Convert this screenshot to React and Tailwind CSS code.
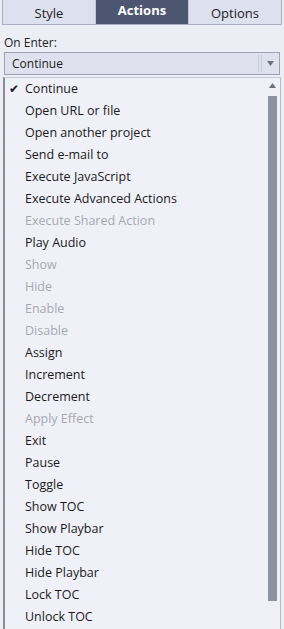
import { useState } from 'react';

const actions = [
    { label: 'Continue', checked: true },
    { label: 'Open URL or file' },
    { label: 'Open another project' },
    { label: 'Send e-mail to' },
    { label: 'Execute JavaScript' },
    { label: 'Execute Advanced Actions' },
    { label: 'Execute Shared Action', disabled: true },
    { label: 'Play Audio' },
    { label: 'Show', disabled: true },
    { label: 'Hide', disabled: true },
    { label: 'Enable', disabled: true },
    { label: 'Disable', disabled: true },
    { label: 'Assign' },
    { label: 'Increment' },
    { label: 'Decrement' },
    { label: 'Apply Effect', disabled: true },
    { label: 'Exit' },
    { label: 'Pause' },
    { label: 'Toggle' },
    { label: 'Show TOC' },
    { label: 'Show Playbar' },
    { label: 'Hide TOC' },
    { label: 'Hide Playbar' },
    { label: 'Lock TOC' },
    { label: 'Unlock TOC' },
];

const tabs = ['Style', 'Actions', 'Options'];

const App = () => {
    const [active, setActive] = useState('Actions');

    return (
        <div className="w-[284px] h-[629px] overflow-hidden bg-[#eceef6] text-[#1c1c1c] font-['Open_Sans','DejaVu_Sans',sans-serif]">
            {/* tab bar */}
            <div className="mx-[2px] flex h-[25px] border border-t-0 border-[#a9adbd] bg-[#dde0ee]">
                {tabs.map((t, i) => (
                    <button
                        key={t}
                        onClick={() => setActive(t)}
                        className={`flex-1 text-[13px] leading-none ${i > 0 ? 'border-l border-[#c3c6d4]' : ''} ${
                            active === t ? 'bg-[#4c5670] text-white font-bold pb-[3px]' : 'pt-[3px]'
                        }`}
                    >
                        {t}
                    </button>
                ))}
            </div>

            <div className="px-[4px] pt-[10px] text-[12px] leading-[16px] text-[#222]">On Enter:</div>

            {/* select */}
            <div className="mx-[4px] mt-[1px] flex h-[23px] items-center border border-[#9ea2b2] bg-[#dfe2ee]">
                <span className="flex-1 pl-[7px] text-[12px]">Continue</span>
                <div className="flex h-full items-center gap-[2px] py-[2px]">
                    <div className="h-full w-px bg-[#c6c9d6]" />
                    <div className="h-full w-px bg-[#c6c9d6]" />
                </div>
                <div className="flex w-[17px] justify-center">
                    <svg width="7" height="5" viewBox="0 0 7 5">
                        <path d="M0 0h7L3.5 5z" fill="#6d7182" />
                    </svg>
                </div>
            </div>

            {/* open list */}
            <div className="mx-[3px] mt-[2px] flex h-[570px] border-l-2 border-r border-t border-l-[#8a8d99] border-r-[#b5b8c6] border-t-[#c6c9d6] bg-[#f0f1f8]">
                <ul className="flex-1">
                    {actions.map((a) => (
                        <li
                            key={a.label}
                            className={`flex h-[22px] items-center text-[12.5px] ${a.disabled ? 'text-[#a6a8b0]' : 'text-[#1a1a1a]'}`}
                        >
                            <span className="w-[20px] pl-[4px] text-[12px] font-bold">{a.checked ? '✔' : ''}</span>
                            <span>{a.label}</span>
                        </li>
                    ))}
                </ul>
                <div className="flex w-[12px] flex-col items-center pt-[5px]">
                    <svg width="7" height="5" viewBox="0 0 7 5">
                        <path d="M3.5 0L7 5H0z" fill="#6d7182" />
                    </svg>
                    <div className="mt-[8px] h-[505px] w-[9px] bg-[#8e919e]" />
                </div>
                <div className="w-[2px]" />
            </div>
        </div>
    );
};

export default App;
